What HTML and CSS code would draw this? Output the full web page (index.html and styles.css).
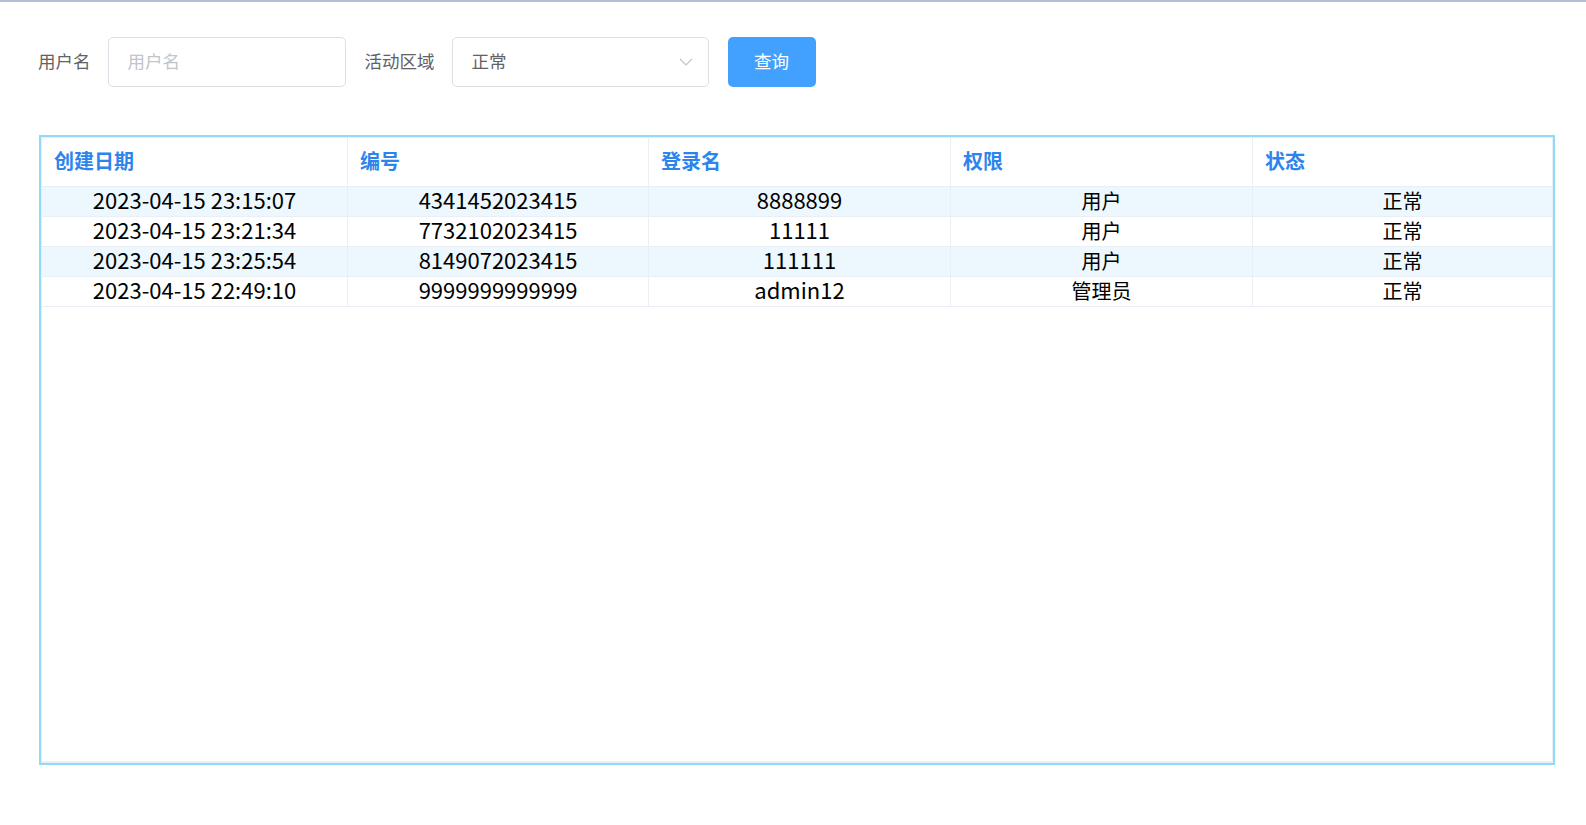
FILE: index.html
```html
<!DOCTYPE html>
<html lang="zh-CN">
<head>
<meta charset="utf-8">
<title>用户列表</title>
<link rel="stylesheet" href="styles.css">
</head>
<body>
<div class="topline"></div>
<div class="page">
  <form class="search">
    <label class="label">用户名</label>
    <div class="input"><span class="placeholder">用户名</span></div>
    <label class="label label2">活动区域</label>
    <div class="input select">
      <span class="value">正常</span>
      <svg class="chev" width="14" height="8" viewBox="0 0 14 8"><path d="M1 1 L7 7 L13 1" fill="none" stroke="#c0c4cc" stroke-width="1.2"/></svg>
    </div>
    <button type="button" class="btn">查询</button>
  </form>

  <div class="table-wrap">
    <div class="table">
      <div class="row head">
        <div class="cell">创建日期</div>
        <div class="cell">编号</div>
        <div class="cell">登录名</div>
        <div class="cell">权限</div>
        <div class="cell">状态</div>
      </div>
      <div class="row stripe">
        <div class="cell num">2023-04-15 23:15:07</div>
        <div class="cell num">4341452023415</div>
        <div class="cell num">8888899</div>
        <div class="cell">用户</div>
        <div class="cell">正常</div>
      </div>
      <div class="row">
        <div class="cell num">2023-04-15 23:21:34</div>
        <div class="cell num">7732102023415</div>
        <div class="cell num">11111</div>
        <div class="cell">用户</div>
        <div class="cell">正常</div>
      </div>
      <div class="row stripe">
        <div class="cell num">2023-04-15 23:25:54</div>
        <div class="cell num">8149072023415</div>
        <div class="cell num">111111</div>
        <div class="cell">用户</div>
        <div class="cell">正常</div>
      </div>
      <div class="row">
        <div class="cell num">2023-04-15 22:49:10</div>
        <div class="cell num">9999999999999</div>
        <div class="cell num">admin12</div>
        <div class="cell">管理员</div>
        <div class="cell">正常</div>
      </div>
    </div>
  </div>
</div>
</body>
</html>
```

FILE: styles.css
```css
* { box-sizing: border-box; }
html, body { margin: 0; padding: 0; background: #fff; }
body {
  font-family: "Noto Sans CJK SC", "Noto Sans", sans-serif;
  width: 1586px;
  height: 825px;
  overflow: hidden;
}
.topline { height: 2px; background: #b1c0d3; }
.page { padding: 35px 0 0 39px; }

.search {
  display: flex;
  align-items: center;
  height: 50px;
  margin: 0;
}
.label {
  font-size: 17.5px;
  color: #606266;
  margin-left: -1px;
  margin-right: 17px;
  padding-bottom: 4px;
}
.label2 { margin-left: 19px; }
.input {
  height: 50px;
  width: 238px;
  border: 1px solid #dcdfe6;
  border-radius: 5px;
  display: flex;
  align-items: center;
  padding: 0 18px 4px 19px;
  font-size: 17.5px;
}
.placeholder { color: #c0c4cc; }
.select {
  width: 257px;
  justify-content: space-between;
  padding: 0 15px 0 19px;
}
.value { color: #606266; padding-bottom: 4px; }
.chev { display: block; }
.btn {
  margin-left: 19px;
  width: 88px;
  height: 50px;
  border: none;
  border-radius: 5px;
  background: #42a0ff;
  color: #fff;
  font-family: inherit;
  font-size: 17.5px;
  padding: 0 0 4px;
}

.table-wrap {
  margin-top: 48px;
  width: 1516px;
  height: 630px;
  border: 2px solid #8fdaf4;
}
.table {
  height: 100%;
  border: 1px solid #ebeef5;
  border-bottom-width: 2px;
}
.row {
  display: grid;
  grid-template-columns: 306px 301px 302px 302px 1fr;
  height: 30px;
  border-bottom: 1px solid #ebeef5;
}
.row.stripe { background: #ecf7fe; }
.cell {
  border-right: 1px solid #ebeef5;
  display: flex;
  align-items: center;
  justify-content: center;
  font-size: 20px;
  line-height: 1;
  color: #000;
  white-space: nowrap;
  padding-bottom: 2px;
}
.cell.num { font-size: 22px; padding-bottom: 6px; }
.cell:last-child { border-right: none; }
.row.head { height: 49px; }
.row.head .cell {
  justify-content: flex-start;
  padding-left: 12px;
  padding-bottom: 3px;
  font-size: 20px;
  font-weight: bold;
  color: #2d84ec;
}
```
